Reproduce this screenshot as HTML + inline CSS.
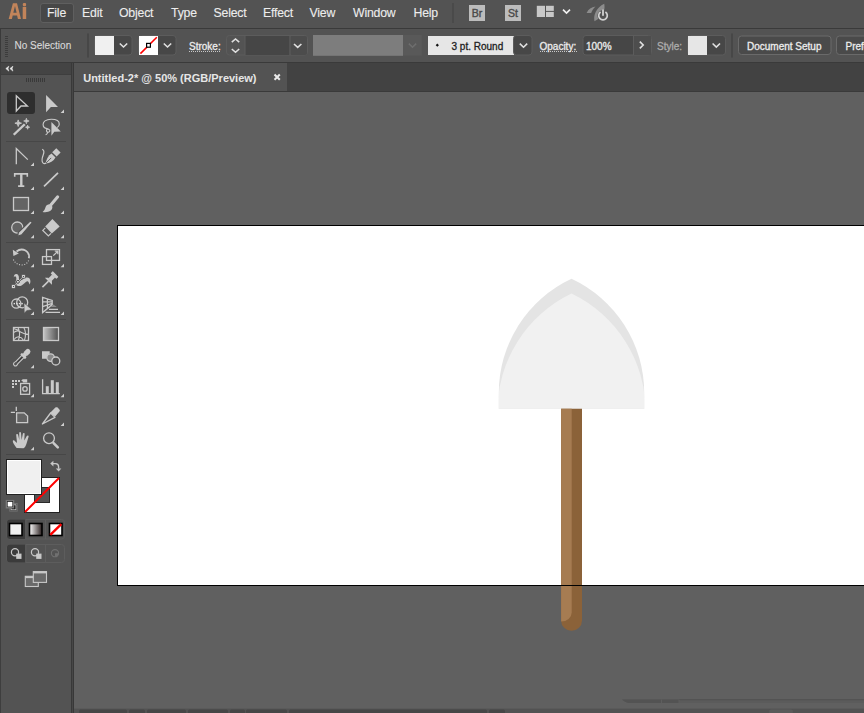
<!DOCTYPE html>
<html><head><meta charset="utf-8">
<style>
*{margin:0;padding:0;box-sizing:border-box}
html,body{width:864px;height:713px;overflow:hidden;background:#535353;font-family:"Liberation Sans",sans-serif;color:#e0e0e0}
.a{position:absolute}
#menubar{left:0;top:0;width:864px;height:28px;background:#535353}
#mline{left:0;top:28px;width:864px;height:1px;background:#3a3a3a}
#ctrl{left:0;top:29px;width:864px;height:33px;background:#535353;border-left:1px solid #3a3a3a}
#cline{left:0;top:62px;width:864px;height:1px;background:#3a3a3a}
#panelhdr{left:0;top:63px;width:71px;height:11px;background:#444}
#panel{left:0;top:75px;width:71px;height:638px;background:#535353}
#pline{left:0;top:74px;width:71px;height:1px;background:#3e3e3e}
#pedge{left:71px;top:63px;width:3px;height:650px;background:#474747;border-left:1px solid #393939;border-right:1px solid #383838}
#tabbar{left:74px;top:63px;width:790px;height:28px;background:#424242}
#tab{left:74px;top:63px;width:213px;height:28px;background:#535353}
#tline{left:74px;top:91px;width:790px;height:1px;background:#3a3a3a}
#canvas{left:74px;top:92px;width:790px;height:617px;background:#606060}
#status{display:none}
#artboard{left:117px;top:225px;width:760px;height:361px;background:#fff;border:1px solid #000}
.ct{position:absolute;top:40px;font-size:10px;color:#ececec;line-height:14px;white-space:pre;-webkit-text-stroke:0.3px currentColor}
.mi{position:absolute;top:4.5px;font-size:12.3px;letter-spacing:-0.2px;color:#ededed;line-height:16px;-webkit-text-stroke:0.1px currentColor}
</style></head><body>
<div id="menubar" class="a"></div>
<div id="mline" class="a"></div>
<div id="ctrl" class="a"></div>
<div id="cline" class="a"></div>
<div id="panelhdr" class="a"></div>
<div id="pline" class="a"></div>
<div id="panel" class="a"></div>
<div id="pedge" class="a"></div>
<div id="tabbar" class="a"></div>
<div id="tab" class="a"></div>
<div id="tline" class="a"></div>
<div id="canvas" class="a"></div>
<div id="status" class="a"></div>
<div id="artboard" class="a"></div>

<!-- MENU BAR -->
<svg class="a" style="left:0;top:0" width="40" height="28">
  <g fill="#c2845a">
    <path fill-rule="evenodd" d="M8.7,19 L12.9,3.2 L17,3.2 L21,19 L17.9,19 L17.1,15.5 L12.7,15.5 L11.9,19 Z M13.3,12.8 L16.6,12.8 L15,6 Z"/>
    <rect x="22.7" y="6.9" width="3.5" height="12.1"/>
    <rect x="22.8" y="2.9" width="3.3" height="3.3" rx="1.2"/>
  </g>
</svg>
<div class="a" style="left:40px;top:3px;width:34px;height:20px;background:#474747;border:1px solid #5f5f5f;border-radius:3px"></div>
<span class="mi" style="left:47px">File</span>
<span class="mi" style="left:82px">Edit</span>
<span class="mi" style="left:119px">Object</span>
<span class="mi" style="left:171px">Type</span>
<span class="mi" style="left:213.5px">Select</span>
<span class="mi" style="left:263px">Effect</span>
<span class="mi" style="left:309.5px">View</span>
<span class="mi" style="left:353px">Window</span>
<span class="mi" style="left:413.5px">Help</span>
<div class="a" style="left:452px;top:3px;width:2px;height:20px;background:#4a4a4a"></div>
<div class="a" style="left:469px;top:5px;width:16px;height:16px;background:#bcbcbc;color:#4a4a4a;font-size:10.5px;line-height:17px;text-align:center;-webkit-text-stroke:0.4px #4a4a4a">Br</div>
<div class="a" style="left:505px;top:5px;width:16px;height:16px;background:#bcbcbc;color:#4a4a4a;font-size:10.5px;line-height:17px;text-align:center;-webkit-text-stroke:0.4px #4a4a4a">St</div>
<svg class="a" style="left:530px;top:0" width="90" height="28">
  <g fill="#c8c8c8">
    <rect x="6.8" y="5.8" width="8.2" height="11.2"/>
    <rect x="16" y="5.8" width="7.8" height="5.1"/>
    <rect x="16" y="11.9" width="7.8" height="5.1"/>
  </g>
  <path d="M33,9.6 L36.5,13 L40,9.6" fill="none" stroke="#f0f0f0" stroke-width="1.7"/>
  <g fill="#8c8c8c">
    <path d="M64.5,21.2 C63,15 66.5,7.5 74.2,3.8 C75.5,9.5 73,15 68.5,18.8 Z"/>
    <path d="M56.6,12.9 C58.4,9.3 61.5,7 65.5,6.6 C63.5,8.6 62,10.8 61.2,12.9 Z"/>
  </g>
  <circle cx="73" cy="15.6" r="5.6" fill="#535353"/>
  <path d="M70.6,12 A4.3,4.3 0 1 0 75.4,12" fill="none" stroke="#d2d2d2" stroke-width="1.7"/>
  <rect x="72.1" y="9.6" width="1.8" height="6.2" fill="#d2d2d2"/>
</svg>

<!-- CONTROL BAR -->
<svg class="a" style="left:0;top:29px" width="864" height="33">
  <g fill="#3c3c3c">
    <rect x="5" y="7" width="3" height="1"/><rect x="5" y="9" width="3" height="1"/><rect x="5" y="11" width="3" height="1"/>
    <rect x="5" y="13" width="3" height="1"/><rect x="5" y="15" width="3" height="1"/><rect x="5" y="17" width="3" height="1"/>
    <rect x="5" y="19" width="3" height="1"/><rect x="5" y="21" width="3" height="1"/><rect x="5" y="23" width="3" height="1"/>
    <rect x="5" y="25" width="3" height="1"/><rect x="5" y="27" width="3" height="1"/>
  </g>
  <rect x="87" y="4.5" width="2" height="24" fill="#474747"/>
  <rect x="731" y="4.5" width="2" height="24" fill="#474747"/>
  <!-- fill control -->
  <rect x="94.5" y="6.5" width="37.5" height="19.5" rx="3" fill="#474747" stroke="#5c5c5c"/>
  <rect x="95" y="7" width="19" height="19" fill="#f0f0f0"/>
  <!-- stroke control -->
  <rect x="138.5" y="6.5" width="37.5" height="19.5" rx="3" fill="#474747" stroke="#5c5c5c"/>
  <rect x="139" y="7" width="19" height="19" fill="#fff"/>
  <line x1="140.4" y1="24.6" x2="156.8" y2="8.3" stroke="#f00" stroke-width="1.6"/>
  <rect x="146.6" y="14.4" width="3.8" height="3.8" fill="#fff" stroke="#000" stroke-width="1.2"/>
  <!-- stroke spinner -->
  <rect x="226.5" y="6.5" width="81" height="19.5" rx="3" fill="#535353" stroke="#5c5c5c"/>
  <rect x="245" y="7" width="44.5" height="19" fill="#464646"/>
  <rect x="290" y="7" width="17" height="19" rx="2" fill="#4c4c4c"/>
  <rect x="244.5" y="7" width="1" height="19" fill="#5c5c5c"/>
  <rect x="289.5" y="7" width="1" height="19" fill="#5c5c5c"/>

  <!-- disabled gray -->
  <rect x="313" y="6" width="90" height="20.8" fill="#7d7d7d"/>
  <rect x="403" y="6" width="18.8" height="20.6" fill="#595959"/>
  <path d="M408.8,14.6 L412.5,18.2 L416.2,14.6" fill="none" stroke="#6e6e6e" stroke-width="1.5"/>
  <!-- brush -->
  <rect x="428" y="7" width="86" height="19" fill="#e6e6e6"/>
  <rect x="513.5" y="6.5" width="18.5" height="19.5" rx="3" fill="#474747" stroke="#5c5c5c"/>
  <path d="M437.3,14.6 L438.9,16.2 L437.3,17.8 L435.7,16.2 Z" fill="#111"/>
  <!-- opacity -->
  <rect x="583" y="6.5" width="68.5" height="19.5" rx="3" fill="#464646" stroke="#5c5c5c"/>
  <rect x="633" y="7" width="1" height="19" fill="#5c5c5c"/>
  <rect x="634" y="7" width="17" height="19" fill="#4d4d4d"/>
  <!-- style -->
  <rect x="687.5" y="6.5" width="38" height="19.5" rx="3" fill="#474747" stroke="#5c5c5c"/>
  <rect x="688" y="7" width="19" height="19" fill="#e6e6e6"/>
  <!-- buttons -->
  <rect x="738.5" y="7" width="92.5" height="18.5" rx="3" fill="#4a4a4a" stroke="#6a6a6a"/>
  <rect x="836.5" y="7" width="40" height="18.5" rx="3" fill="#4a4a4a" stroke="#6a6a6a"/>
  <g fill="none" stroke="#e0e0e0" stroke-width="1.6">
    <path d="M119.8,14.5 L123.5,18 L127.2,14.5"/>
    <path d="M163.8,14.5 L167.5,18 L171.2,14.5"/>
    <path d="M231.8,13.2 L235.5,10 L239.2,13.2"/>
    <path d="M231.8,20 L235.5,23.3 L239.2,20"/>
    <path d="M294,15 L297.7,18.4 L301.4,15"/>
    <path d="M519.8,14.6 L523.5,18.2 L527.2,14.6"/>
    <path d="M437.5,14.5 L437.5,14.5"/>
    <path d="M639.8,12.6 L643.2,16 L639.8,19.4"/>
    <path d="M712.6,14.5 L716.3,18.1 L720,14.5"/>
  </g>
  <!-- dotted underlines -->
  <line x1="189" y1="22.5" x2="221" y2="22.5" stroke="#c8c8c8" stroke-width="1" stroke-dasharray="1,1"/>
  <line x1="540" y1="22.5" x2="577" y2="22.5" stroke="#c8c8c8" stroke-width="1" stroke-dasharray="1,1"/>
</svg>
<span class="ct" style="left:14.5px;top:39px;color:#dadada;-webkit-text-stroke:0.1px #dadada">No Selection</span>
<span class="ct" style="left:189px">Stroke:</span>
<span class="ct" style="left:451.5px;color:#1e1e1e">3 pt. Round</span>
<span class="ct" style="left:539.5px">Opacity:</span>
<span class="ct" style="left:586px">100%</span>
<span class="ct" style="left:657px;color:#acacac">Style:</span>
<span class="ct" style="left:747px">Document Setup</span>
<span class="ct" style="left:845.5px">Prefe</span>

<!-- TOOL PANEL -->
<svg class="a" style="left:0;top:0" width="72" height="713">
  <rect x="0" y="63" width="1" height="650" fill="#3e3e3e"/>
  <path d="M8.8,66.2 L5.8,68.6 L8.8,71.1 L8,68.6 Z M12.9,66.2 L9.9,68.6 L12.9,71.1 L12.1,68.6 Z" fill="#e6e6e6" stroke="#e6e6e6" stroke-width="0.6" stroke-linejoin="round"/>
  <g fill="#393939">
    <rect x="26" y="78" width="1" height="4"/><rect x="28" y="78" width="1" height="4"/><rect x="30" y="78" width="1" height="4"/>
    <rect x="32" y="78" width="1" height="4"/><rect x="34" y="78" width="1" height="4"/><rect x="36" y="78" width="1" height="4"/>
    <rect x="38" y="78" width="1" height="4"/><rect x="40" y="78" width="1" height="4"/><rect x="42" y="78" width="1" height="4"/>
    <rect x="44" y="78" width="1" height="4"/>
  </g>
  <rect x="7" y="92" width="28" height="22" rx="3" fill="#2e2e2e"/>
  <!-- separators -->
  <g fill="#474747">
    <rect x="6" y="141" width="60" height="1"/>
    <rect x="6" y="242" width="60" height="1"/>
    <rect x="6" y="319" width="60" height="1"/>
    <rect x="6" y="372" width="60" height="1"/>
    <rect x="6" y="401" width="60" height="1"/>
    <rect x="6" y="454" width="60" height="1"/>
  </g>
  <!-- corner triangles -->
  <g fill="#d0d0d0">
    <path d="M60.6,113.1 H64 V109.6 Z"/>
    <path d="M30.6,166.1 H34 V162.6 Z"/>
    <path d="M30.6,190 H34 V186.6 Z"/><path d="M60.6,190 H64 V186.6 Z"/>
    <path d="M30.6,214.1 H34 V210.6 Z"/><path d="M60.6,214.1 H64 V210.6 Z"/>
    <path d="M30.6,238.2 H34 V234.7 Z"/><path d="M60.6,238.2 H64 V234.7 Z"/>
    <path d="M30.6,267.3 H34 V263.8 Z"/><path d="M60.6,267.3 H64 V263.8 Z"/>
    <path d="M30.6,291.2 H34 V287.7 Z"/><path d="M60.6,291.2 H64 V287.7 Z"/>
    <path d="M30.6,315.1 H34 V311.6 Z"/><path d="M60.6,315.1 H64 V311.6 Z"/>
    <path d="M30.6,368.2 H34 V364.7 Z"/>
    <path d="M30.6,397.3 H34 V393.8 Z"/><path d="M60.6,397.3 H64 V393.8 Z"/>
    <path d="M60.6,426.1 H64 V422.6 Z"/>
    <path d="M30.6,450.2 H34 V446.7 Z"/>
  </g>
  <g fill="none" stroke="#cacaca" stroke-width="1.3" stroke-linejoin="miter">
    <!-- selection -->
    <path d="M16.3,95.8 L16.3,111 L21,106 L27.4,106 Z"/>
    <!-- anchor -->
    <path d="M16.3,164.2 V148.6 L27.8,159.6"/>
    <!-- rect -->
    <rect x="13.5" y="197.5" width="15" height="13" fill="#646464"/>
    <!-- shaper circle -->
    <circle cx="17.3" cy="227.6" r="5.6" fill="#646464"/>
    <!-- scale -->
    <rect x="46.5" y="249.6" width="13" height="10.8"/>
    <rect x="42.5" y="256.6" width="9" height="7.8"/>
    <path d="M53.3,255.6 L57.8,251.2 M54.8,251.2 H57.8 V254.2"/>
    <!-- shape builder -->
    <circle cx="22.2" cy="302.4" r="5.5"/>
    <circle cx="16.3" cy="303.6" r="4.6"/>
    <!-- perspective -->
    <path d="M42.6,297.4 V312.6 L52.2,304.6 V300.4 Z M47.4,298.8 V308.6 M42.6,301.8 L52.2,301.8 M42.6,306.6 L52.2,303.4"/>
    <path d="M49,309.4 H58 M45.5,312.4 H60"/>
    <!-- mesh -->
    <rect x="13.5" y="327.5" width="15" height="13"/>
    <path d="M18,327.5 C19.8,331 19.9,336 18.4,340.5 M23.8,327.5 C25.9,331 25.9,336 24.4,340.5 M13.5,332.6 C15.5,331 17.5,330.4 19.2,331.2 C21.5,332.4 23.5,334.2 28.5,334.4 M13.5,340 C15.5,337.6 17.5,336.4 19.2,336.8 C21,337.2 22.4,338.6 23.6,340.5 M13.5,328.4 L18.6,330.2" stroke-width="1.1"/>
    <!-- gradient -->
    <rect x="43.5" y="327.5" width="15" height="13" fill="url(#gr)"/>

    <!-- blend circles -->
    <circle cx="50.6" cy="357.6" r="3.8" fill="#888"/>
    <circle cx="55.8" cy="361" r="4" fill="#535353"/>
    <!-- sprayer -->
    <rect x="20.6" y="383.5" width="9" height="10.8"/>
    <circle cx="25" cy="388.9" r="2.2"/>
    <!-- graph -->
    <path d="M42.6,379.2 V393.6 H59.8"/>
    <!-- artboard -->
    <path d="M16.6,412.8 H24.2 L27.6,416 V422.6 H16.6 Z" fill="#646464"/>
    <path d="M16.3,406.8 V411 M10.8,412.3 H15"/>
    <!-- pencil outline -->
    <path d="M42.4,424 L50.6,413 L55,417.4 Z" stroke-linejoin="round"/>
    <!-- zoom -->
    <circle cx="49" cy="438.2" r="5.4"/>
  </g>
  <defs><linearGradient id="gr" x1="0" x2="1"><stop offset="0" stop-color="#c4c4c4"/><stop offset="1" stop-color="#505050"/></linearGradient></defs>
  <g fill="#cacaca">
    <!-- direct select -->
    <path d="M46.1,95 L46.1,112.2 L50.9,106.9 L58,106.9 Z"/>
    <!-- wand -->
    <path d="M12.9,133.9 L23.9,123.4 L25.6,125.1 L14.6,135.6 Z"/>
    <path d="M18.2,119.9 Q18.2,123.2 21.5,123.2 Q18.2,123.2 18.2,126.5 Q18.2,123.2 14.899999999999999,123.2 Q18.2,123.2 18.2,119.9 Z" stroke="#cacaca" stroke-width="0.9" stroke-linejoin="round"/>
    <path d="M26.4,118.3 Q26.4,121 29.099999999999998,121 Q26.4,121 26.4,123.7 Q26.4,121 23.7,121 Q26.4,121 26.4,118.3 Z" stroke="#cacaca" stroke-width="0.8" stroke-linejoin="round"/>
    <path d="M27.6,125.10000000000001 Q27.6,127.2 29.700000000000003,127.2 Q27.6,127.2 27.6,129.3 Q27.6,127.2 25.5,127.2 Q27.6,127.2 27.6,125.10000000000001 Z" stroke="#cacaca" stroke-width="0.7" stroke-linejoin="round"/>
    <!-- lasso arrow -->
    <path d="M51.4,122 L51.4,135.8 L54.3,131.8 L60.8,131.6 Z"/>
    <!-- pen nib -->
    <path d="M45.5,163.6 C46.5,159 48,155.5 51.5,153.4 L55.5,157.4 C53.5,161 50,162.8 45.5,163.6 Z"/>
    <path d="M52.2,152.2 L56.3,148.2 L60.6,152.5 L56.6,156.5 Z"/>
    <path d="M45.6,163.5 L51.2,157.9" stroke="#535353" stroke-width="0.9"/>
    <!-- T -->
    <path d="M13.9,173.1 H28.1 V176.8 H26.5 V174.8 H22.5 V185.3 H24.3 V186.9 H18.1 V185.3 H20.1 V174.8 H15.5 V176.8 H13.9 Z"/>
    <!-- brush -->
    <path d="M51,204.8 L57.7,196.8" stroke="#cacaca" stroke-width="3" stroke-linecap="round"/>
    <path d="M42.6,212 C44,211 45,209 45.6,207 C46.4,204.6 49.5,203.4 51.4,205 C53,206.6 52.6,209.2 50.8,210.6 C48.6,212.2 45.4,212.4 42.6,212 Z"/>
    <!-- shaper pencil -->
    <path d="M17.6,236.4 L18.4,232.2 L29.6,221.6 C30.4,220.8 32.2,221.4 32,222.8 L21.8,234.8 Z" stroke="#535353" stroke-width="1.2"/>
    <!-- eraser -->
    <path d="M52.4,219.1 L59.7,226.4 L51.8,233.6 L45.2,226.4 Z"/>
    <!-- rotate arrow head -->
    <path d="M12.8,249.8 L13.4,256 L18.8,253.6 Z"/>
    <!-- puppet body -->
    <path d="M13.9,277.6 C13.5,275.4 14.8,273.9 16.3,274 C18,274.1 19,275.8 18.9,277.8 C18.8,279 19,280 19.9,280.4 C21.5,281 23.5,278.4 26.2,277.6 C28.6,277 30.6,278.6 30.4,281.6 C30.3,283 30,284 29.6,284.4 C29,282.6 28.4,281.2 27.4,281.2 C25.8,281.2 23.8,284.2 21.6,285.4 C19.4,286.6 16.8,286.2 16,284.6 C15.4,283.2 16,281.4 16.3,279.6 C16.5,278 16.2,276.6 15.4,276.4 C14.6,276.2 14.1,277 13.9,277.6 Z"/>
    <!-- pin -->
    <g transform="translate(49.8,279.8) rotate(45)">
      <rect x="-4" y="-8.2" width="8" height="3" rx="0.5"/>
      <rect x="-2.1" y="-5.4" width="4.2" height="5.2"/>
      <path d="M-5,2 L-2.6,-0.4 H2.6 L5,2 Z"/>
      <rect x="-0.8" y="1.8" width="1.6" height="8.6"/>
    </g>
    <!-- shape builder arrow -->
    <path d="M24,303.1 L24.3,313.2 L26.8,310.5 L32,309.7 Z" stroke="#535353" stroke-width="0.5"/>
    <!-- eyedropper -->
    <g transform="translate(14.8,364.6) rotate(45)">
      <path d="M-1.5,-11.4 V-3.2 C-1.5,-2.4 -1.9,-1.9 -1.9,-0.9 A1.9,1.9 0 0 0 1.9,-0.9 C1.9,-1.9 1.5,-2.4 1.5,-3.2 V-11.4" fill="none" stroke="#cacaca" stroke-width="1.1"/>
      <rect x="-0.5" y="-10.5" width="1" height="7" fill="#3a3a3a"/>
      <rect x="-3.3" y="-13.4" width="6.6" height="2.4" rx="0.6"/>
      <rect x="-2.1" y="-15.4" width="4.2" height="2.4"/>
      <path d="M-2.6,-15 V-18.4 A2.6,2.6 0 0 1 2.6,-18.4 V-15 Z"/>
    </g>
    <!-- blend square -->
    <path d="M42,351.2 H49.7 V353.6 C47.5,354.5 46.6,356.4 46.8,358.8 H42 Z"/>
    <!-- sprayer dots -->
    <rect x="12" y="380" width="2" height="2"/><rect x="15" y="380" width="2" height="2"/><rect x="18" y="380" width="2" height="2"/>
    <rect x="12" y="383" width="2" height="2"/><rect x="15" y="383" width="2" height="2"/><rect x="12" y="386" width="2" height="2"/>
    <path d="M22.8,379.2 H27.2 V382.5 H22.8 Z M21.2,380.5 L22.8,379.2 V381.5 Z"/>
    <!-- graph bars -->
    <rect x="45.8" y="386.2" width="3" height="7.4"/><rect x="50.8" y="380.2" width="3" height="13.4"/><rect x="55.8" y="382.2" width="3" height="11.4"/>
    <!-- pencil cap -->
    <path d="M50.2,412.8 L55.4,407.6 C56,407 57,407 57.6,407.6 L59.4,409.4 C60,410 60,411 59.4,411.6 L55.2,416.4 Z"/>
    <!-- hand -->
    <path d="M16.6,448 C14.5,445.5 13,443 12.8,441.3 C12.8,440.5 13.8,440 14.5,440.7 L17,443 L16.2,435 C16.1,433.9 17.8,433.5 18.1,434.7 L19.3,440 L19.2,432.8 C19.2,431.6 20.9,431.6 21,432.8 L21.6,440 L22.9,433.6 C23.1,432.5 24.8,432.8 24.6,433.9 L24.3,440.6 L26.8,436 C27.4,435 28.9,435.5 28.6,436.7 L26.4,444 C25.7,446.3 24.4,448 23.5,448.2 Z"/>
    <!-- zoom handle -->
    <path d="M53.6,443.2 L57.8,447.4" stroke="#cacaca" stroke-width="2.6" stroke-linecap="round"/>
  </g>
  <!-- rotate dotted arc -->
  <path d="M16.5,251.5 C19,249.5 22.5,249 25.5,250.5 C28.6,252.2 29.5,255.8 28.8,258.3" fill="none" stroke="#cacaca" stroke-width="1.8"/>
  <path d="M13.4,259.5 C15,263.6 19.5,265.5 23.5,264.8 C26,264.2 27.8,262.5 28.6,260.5" fill="none" stroke="#cacaca" stroke-width="1.1" stroke-dasharray="1,1.6"/>
  <!-- lasso loop -->
  <path d="M57.2,127.6 C59.6,126 60.2,122.4 57.4,120.6 C54.4,118.8 48,118.8 45,120.9 C42.4,122.8 42.6,126.2 44.6,127.8 C46,128.9 48.6,128.4 49.6,130 C50.3,131.3 49.1,132.6 47.6,132.1 C46,131.5 46.3,129.4 47.6,128.5 M47.3,132.3 C47.6,133.4 46.9,134.3 45.6,134.6" fill="none" stroke="#cacaca" stroke-width="1.15"/>
  <!-- pen curl -->
  <path d="M42.2,149.3 C44,150 44.2,152.4 43.2,155 C42.2,157.6 41.4,160.5 42.6,162.5 C43.5,163.8 45,163.8 46,163" fill="none" stroke="#cacaca" stroke-width="1.2"/>
  <!-- line tool -->
  <path d="M44,186.4 L58,172.8" stroke="#cacaca" stroke-width="1.7"/>
  <!-- eraser outline part -->
  <path d="M45.3,227.9 L42.8,230.4 L48.4,236 L51,233.4" fill="none" stroke="#cacaca" stroke-width="1.2"/>
  <!-- shape builder dots -->
  <g fill="#e2e2e2"><rect x="13.6" y="302.9" width="1.4" height="1.4"/><rect x="16.2" y="302.9" width="1.4" height="1.4"/><rect x="18.8" y="302.9" width="1.4" height="1.4"/><rect x="21.4" y="302.9" width="1.4" height="1.4"/></g>
  <!-- perspective shade -->
  <path d="M53.4,304.4 L56.8,307 H50.4 Z" fill="#8a8a8a"/>
  <!-- puppet pins -->
  <path d="M13.4,286.5 L23.5,276.4" stroke="#535353" stroke-width="1.7"/>
  <path d="M13.4,286.5 L23.5,276.4" stroke="#cacaca" stroke-width="0.9"/>
  <rect x="11.6" y="284.7" width="3.6" height="3.6" fill="#d6d6d6" stroke="#535353" stroke-width="0.6"/>
  <rect x="13" y="286.1" width="0.9" height="0.9" fill="#333"/>
  <rect x="21.8" y="274.7" width="3.4" height="3.4" fill="#d6d6d6" stroke="#535353" stroke-width="0.6"/>
  <rect x="23.1" y="276" width="0.9" height="0.9" fill="#333"/>
  <circle cx="17.9" cy="281.8" r="2.3" fill="#d6d6d6"/><circle cx="17.9" cy="281.8" r="1.5" fill="#d6d6d6" stroke="#3a3a3a" stroke-width="0.9"/>
</svg>

<!-- FILL/STROKE -->
<svg class="a" style="left:0;top:450px" width="72" height="150">
  <!-- stroke swatch -->
  <rect x="24.5" y="27.5" width="35" height="35" fill="#fff" stroke="#222" stroke-width="1"/>
  <rect x="34.5" y="37.5" width="15" height="15" fill="#535353" stroke="#2a2a2a" stroke-width="1"/>
  <line x1="25" y1="62" x2="59" y2="28" stroke="#f00" stroke-width="2"/>
  <!-- fill swatch -->
  <rect x="6.5" y="9.5" width="35" height="35" fill="#fff" stroke="#222" stroke-width="1"/>
  <rect x="8" y="11" width="32" height="32" fill="#f0f0f0"/>
  <!-- swap arrow -->
  <path d="M52.5,13.6 H55.6 C57.6,13.6 58.6,14.8 58.6,16.8 V18.8" fill="none" stroke="#c8c8c8" stroke-width="1.4"/>
  <path d="M50.2,13.6 L53.4,10.8 V16.4 Z M58.6,21.6 L55.8,18.4 H61.4 Z" fill="#c8c8c8"/>
  <!-- default -->
  <rect x="9.8" y="53.6" width="7.4" height="7.4" fill="#111" stroke="#777" stroke-width="1"/>
  <rect x="11" y="54.8" width="5" height="5" fill="none" stroke="#ddd" stroke-width="0.8"/>
  <rect x="6.2" y="50.4" width="7.6" height="7.6" fill="#fff" stroke="#777" stroke-width="1"/>
  <rect x="7.2" y="51.4" width="5.6" height="5.6" fill="#fff" stroke="#222" stroke-width="0.9"/>
  <!-- color mode group -->
  <rect x="7" y="69.5" width="57.5" height="19.5" rx="3" fill="#535353" stroke="#5d5d5d"/>
  <path d="M10,69.5 H25.3 V89 H10 A3,3 0 0 1 7,86 V72.5 A3,3 0 0 1 10,69.5 Z" fill="#3b3b3b"/>
  <rect x="25.3" y="70" width="1" height="19" fill="#5d5d5d"/>
  <rect x="45" y="70" width="1" height="19" fill="#5d5d5d"/>
  <rect x="9.5" y="73.5" width="12.5" height="12" fill="#f0f0f0" stroke="#000" stroke-width="1.6"/>
  <rect x="29.5" y="73.5" width="12.5" height="12" fill="url(#gr2)" stroke="#000" stroke-width="1.6"/>
  <rect x="49.5" y="73.5" width="12.5" height="12" fill="#fff" stroke="#000" stroke-width="1.6"/>
  <line x1="50.3" y1="84.8" x2="61.3" y2="74.2" stroke="#f00" stroke-width="2.4"/>
  <!-- draw mode group -->
  <rect x="7" y="94.5" width="57.5" height="18" rx="3" fill="#535353" stroke="#5d5d5d"/>
  <path d="M10,94.5 H25.3 V112.5 H10 A3,3 0 0 1 7,109.5 V97.5 A3,3 0 0 1 10,94.5 Z" fill="#3b3b3b"/>
  <rect x="25.3" y="95" width="1" height="17.5" fill="#5d5d5d"/>
  <rect x="45" y="95" width="1" height="17.5" fill="#5d5d5d"/>
  <circle cx="15" cy="102.2" r="3.6" fill="none" stroke="#c8c8c8" stroke-width="1.2"/>
  <rect x="16.2" y="103.6" width="5.3" height="5.3" fill="#c8c8c8"/>
  <circle cx="35" cy="102.2" r="3.6" fill="#535353" stroke="#c8c8c8" stroke-width="1.2"/>
  <rect x="36.2" y="103.6" width="5.3" height="5.3" fill="#c8c8c8"/>
  <circle cx="55" cy="103.2" r="3.6" fill="none" stroke="#707070" stroke-width="1.1"/>
  <path d="M55,103.2 H58.6 A3.6,3.6 0 0 1 55,106.8 Z" fill="#707070"/>
  <!-- screen mode -->
  <rect x="25.3" y="126.3" width="13" height="10.2" fill="#6a6a6a" stroke="#c8c8c8" stroke-width="1.1"/>
  <rect x="25.3" y="126.3" width="13" height="1.8" fill="#c8c8c8"/>
  <rect x="33.3" y="121.6" width="13.2" height="10.8" fill="#6a6a6a" stroke="#c8c8c8" stroke-width="1.1"/>
  <rect x="33.3" y="121.6" width="13.2" height="1.8" fill="#c8c8c8"/>
  <defs><linearGradient id="gr2" x1="0" x2="1"><stop offset="0" stop-color="#fff"/><stop offset="1" stop-color="#2a2020"/></linearGradient></defs>
</svg>
<!-- TAB -->
<span class="a" style="left:83.2px;top:71px;font-size:11px;font-weight:bold;color:#e6e6e6;line-height:14px;white-space:pre">Untitled-2* @ 50% (RGB/Preview)</span>
<svg class="a" style="left:270px;top:70px" width="14" height="14">
  <path d="M4.5,4.5 L9.8,9.8 M9.8,4.5 L4.5,9.8" stroke="#eaeaea" stroke-width="2"/>
</svg>

<!-- BOTTOM -->
<svg class="a" style="left:74px;top:696px" width="790" height="17">
  <path d="M548,3.5 L790,3.5 L790,7 L556,7 C552,7 550,5 548,3.5 Z" fill="#5b5b5b"/>
  <path d="M548,3.5 L605,3.5 L605,7 L556,7 C552,7 550,5 548,3.5 Z" fill="#535353"/>
  <rect x="605" y="3" width="185" height="1.2" fill="#535353"/>
  <rect x="587" y="3.5" width="1" height="3.5" fill="#5e5e5e"/>
  <rect x="604.5" y="3.5" width="1" height="3.5" fill="#5e5e5e"/>
  <rect x="0" y="12.5" width="790" height="4.5" fill="#525252"/>
  <rect x="0" y="12" width="790" height="1" fill="#5a5a5a"/>
  <g fill="#464646">
    <rect x="5" y="13.5" width="48" height="4" rx="1.5"/>
    <rect x="55" y="13.5" width="16" height="4" rx="1.5"/>
    <rect x="73" y="13.5" width="39" height="4" rx="1.5"/>
    <rect x="114" y="13.5" width="40" height="4" rx="1.5"/>
    <rect x="156" y="13.5" width="15" height="4" rx="1.5"/>
    <rect x="172" y="13.5" width="41" height="4" rx="1.5"/>
    <rect x="215" y="13.5" width="198" height="4" rx="1.5"/>
    <rect x="415" y="13.5" width="16" height="4" rx="1.5"/>
    <rect x="695" y="13.5" width="24" height="4" rx="2" fill="#5a5a5a"/>
  </g>
</svg>
<svg class="a" style="left:0;top:0" width="864" height="713">
  <!-- shovel -->
  <defs><clipPath id="blade"><path d="M498.8,408.8 V392.8 A125.8,125.8 0 0 1 571.5,278.8 A125.8,125.8 0 0 1 644.2,392.8 V408.8 Z"/></clipPath></defs>
  <path d="M498.8,408.8 V392.8 A125.8,125.8 0 0 1 571.5,278.8 A125.8,125.8 0 0 1 644.2,392.8 V408.8 Z" fill="#e4e4e4"/>
  <path clip-path="url(#blade)" d="M497.4,420 V411.2 A130.6,130.6 0 0 1 571.5,293.5 A130.6,130.6 0 0 1 645.6,411.2 V420 Z" fill="#f1f1f1"/>
  <path d="M561.1,408.8 H582 V620.4 A10.45,10.45 0 0 1 561.1,620.4 Z" fill="#8b6239"/>
  <path d="M561.1,408.8 H571.7 V612.6 A10.6,9 0 0 1 561.1,621.6 Z" fill="#a67c52"/>
  <rect x="117" y="585" width="747" height="1" fill="#000"/>
</svg>
</body></html>
